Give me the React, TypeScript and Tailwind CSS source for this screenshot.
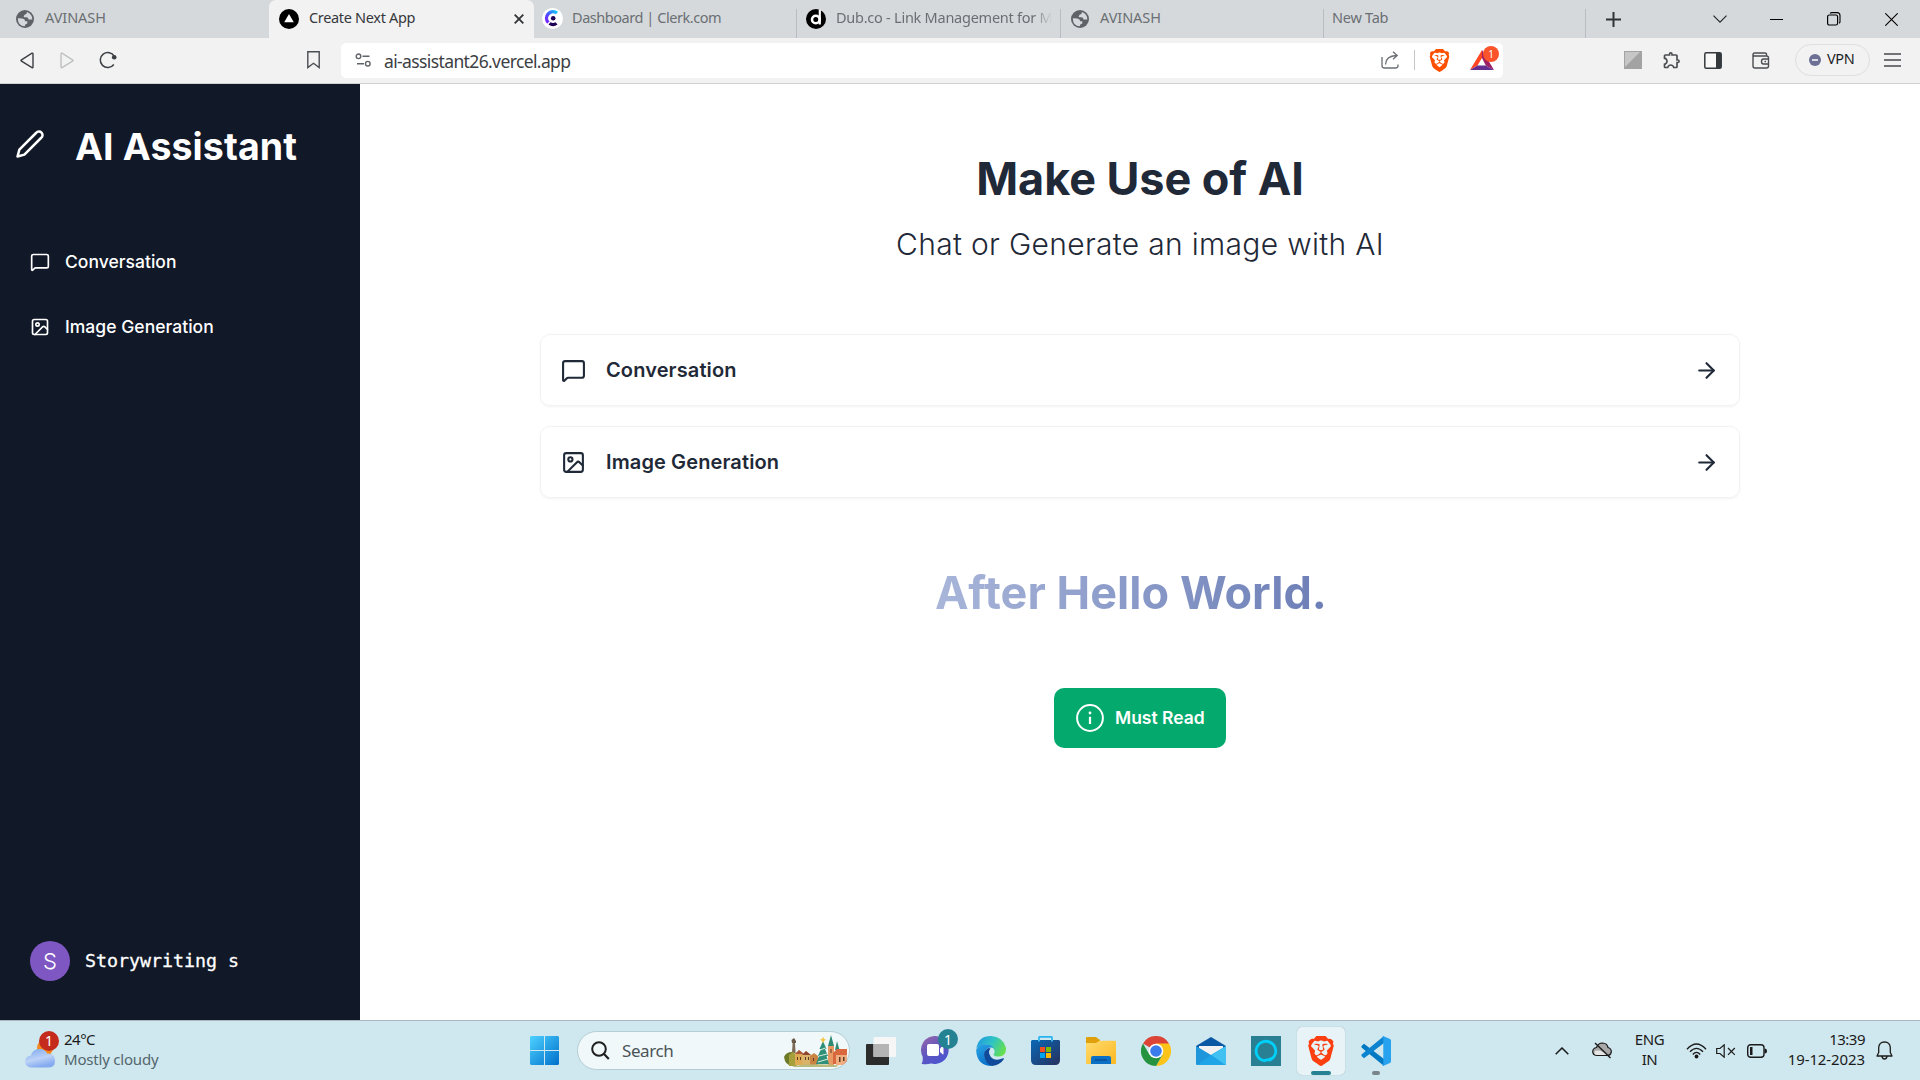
import React from "react";
import { ArrowRight, Image as ImageIcon, MessageSquare } from "lucide-react";
import { SiBrave } from "react-icons/si";
import { MdOutlineExtension } from "react-icons/md";

const ui = "font-['Noto_Sans','Open_Sans',sans-serif]";

function GlobeIcon() {
  return (
    <svg width="18" height="18" viewBox="0 0 18 18" className="mr-[11px]">
      <circle cx="9" cy="9" r="9" fill="#5f6368" />
      <path d="M1.800 8.200L6.500 8.400Q9.200 8.800 9.200 11.200H11.300V13.600Q9 13.800 8.800 16.300Q2 16.300 1.800 8.200Z" fill="#d5d9dc" />
      <path d="M11 2Q11 4.600 8.600 4.700L7.600 6.400Q8 7.600 10 7.300Q12.300 7 12.500 9.500L16.300 9.600Q16.400 4 11 2Z" fill="#d5d9dc" />
    </svg>
  );
}

function ClerkIcon() {
  return (
    <svg width="21" height="21" viewBox="0 0 21 21">
      <defs>
        <linearGradient id="clerk" x1="1" y1="0" x2="0" y2="1">
          <stop offset="0" stopColor="#12c8ff" />
          <stop offset="0.55" stopColor="#4b50ff" />
          <stop offset="1" stopColor="#7a1fff" />
        </linearGradient>
      </defs>
      <circle cx="10.500" cy="10.500" r="10.500" fill="#fff" />
      <path d="M15 5A6.500 6.500 0 0 0 6.300 14.600" fill="none" stroke="url(#clerk)" strokeWidth="3.400" />
      <circle cx="11.200" cy="10.300" r="2.300" fill="#1f0256" />
      <path d="M6.500 16.500L8.500 14.300Q11 15.800 13.500 14.300L15.500 16.500Q11 20 6.500 16.500Z" fill="#1f0256" />
    </svg>
  );
}

function DubIcon() {
  return (
    <svg width="20" height="20" viewBox="0 0 20 20">
      <circle cx="10" cy="10" r="10" fill="#000" />
      <circle cx="9.800" cy="10.500" r="3.800" fill="none" stroke="#fff" strokeWidth="2.600" />
      <path d="M13.800 0.500V15.500" stroke="#fff" strokeWidth="2.200" />
    </svg>
  );
}

function BatIcon() {
  return (
    <svg width="24" height="20" viewBox="0 0 24 20">
      <path d="M12 0L24 20L15.800 15.500L12 8Z" fill="#9e1f63" />
      <path d="M12 0L0 20L7.500 15.500L12 8Z" fill="#ff4724" />
      <path d="M0 20H24L15.800 15.500H7.500Z" fill="#662d91" />
    </svg>
  );
}

function Tab({ icon, title, width, titleClass }: { icon?: React.ReactNode; title: string; width: string; titleClass?: string }) {
  return (
    <div className={`flex h-full shrink-0 items-center overflow-hidden pb-px whitespace-nowrap text-[14.5px] text-[#6b6f73] ${width}`}>
      {icon}
      <span className={`mb-px ${titleClass ?? ""}`}>{title}</span>
    </div>
  );
}

function Divider() {
  return <div className="mt-[9px] h-[29px] w-px shrink-0 self-start bg-[#b9bdc1]" />;
}

function TabStrip() {
  return (
    <div className="flex h-[38px] bg-[#d5d9dc]">
      <Tab width="w-[269px] pl-[16px]" titleClass="tracking-[-0.05px]" icon={<GlobeIcon />} title="AVINASH" />
      <div className="flex w-[265px] shrink-0 items-center rounded-t-[7px] bg-[#f2f2f2] pl-[10px] text-[14.5px] text-[#35383c]">
        <svg width="20" height="20" viewBox="0 0 20 20" className="mr-[10px]">
          <circle cx="10" cy="10" r="10" fill="#000" />
          <path d="M10 5L14.800 13.300H5.200Z" fill="#fff" />
        </svg>
        <span className="mb-[2px] tracking-[-0.33px]">Create Next App</span>
        <svg width="10" height="10" viewBox="0 0 10 10" className="mr-[10px] ml-auto">
          <path d="M0.700 0.700L9.300 9.300M9.300 0.700L0.700 9.300" stroke="#303437" strokeWidth="1.800" />
        </svg>
      </div>
      <Tab width="w-[262px] pl-[8px]" titleClass="ml-[9px] tracking-[-0.45px]" icon={<ClerkIcon />} title="Dashboard | Clerk.com" />
      <Divider />
      <Tab
        width="w-[263px] pl-[9px]"
        titleClass="ml-[10px] tracking-[-0.25px] [mask-image:linear-gradient(to_right,#000_91%,transparent)]"
        icon={<DubIcon />}
        title="Dub.co - Link Management for M"
      />
      <Divider />
      <Tab width="w-[262px] pl-[10px]" titleClass="tracking-[-0.05px]" icon={<GlobeIcon />} title="AVINASH" />
      <Divider />
      <Tab width="w-[261px] pl-[8px]" titleClass="tracking-[-0.25px]" title="New Tab" />
      <Divider />
      <div className="flex flex-1 items-center pl-[20px]">
        <svg width="15" height="15" viewBox="0 0 15 15">
          <path d="M7.500 0V15M0 7.500H15" stroke="#303437" strokeWidth="2" />
        </svg>
        <svg width="14" height="8" viewBox="0 0 14 8" className="ml-[92px]">
          <path d="M0.500 0.700L7 7.200L13.500 0.700" fill="none" stroke="#222" strokeWidth="1.100" />
        </svg>
        <svg width="13" height="1" viewBox="0 0 13 1" className="ml-[43px]">
          <path d="M0 0.500H13" stroke="#000" />
        </svg>
        <svg width="14" height="14" viewBox="0 0 14 14" className="ml-[44px]">
          <rect x="0.600" y="3" width="10" height="10" rx="1.800" fill="none" stroke="#000" strokeWidth="1.200" />
          <path d="M3 1.200Q4 0.600 5 0.600H10A3 3 0 0 1 13 3.600V9.500Q13 10.500 12.300 11.300" fill="none" stroke="#000" strokeWidth="1.100" />
        </svg>
        <svg width="13" height="13" viewBox="0 0 13 13" className="ml-[44px]">
          <path d="M0.300 0.300L12.700 12.700M12.700 0.300L0.300 12.700" stroke="#000" strokeWidth="1.100" />
        </svg>
      </div>
    </div>
  );
}

function Toolbar() {
  return (
    <div className="flex h-[46px] items-center border-b border-[#cfd1d3] bg-[#f2f2f2] pb-px">
      <div className="flex w-[341px] shrink-0 items-center pl-[20px]">
        <svg width="14" height="17" viewBox="0 0 14 17">
          <path d="M12 1.200Q13 0.900 13 2V15Q13 16.100 12 15.600L1.500 9.200Q0.500 8.500 1.500 7.800Z" fill="none" stroke="#3b3e43" strokeWidth="1.400" />
        </svg>
        <svg width="14" height="17" viewBox="0 0 14 17" className="ml-[26px]">
          <path d="M2 1.200Q1 0.900 1 2V15Q1 16.100 2 15.600L12.500 9.200Q13.500 8.500 12.500 7.800Z" fill="none" stroke="#bfc0c2" strokeWidth="1.400" />
        </svg>
        <svg width="18" height="18" viewBox="0 0 18 18" className="ml-[25px]">
          <path d="M14.800 13.500A7.500 7.500 0 1 1 15.300 5.300" fill="none" stroke="#3b3e43" strokeWidth="1.500" />
          <circle cx="15.200" cy="6.200" r="2.300" fill="#3b3e43" />
        </svg>
        <svg width="13" height="18" viewBox="0 0 13 18" className="ml-[190px]">
          <path d="M0.800 0.800H12.200V16.500L6.500 12.300L0.800 16.500Z" fill="none" stroke="#4a4d52" strokeWidth="1.400" />
        </svg>
      </div>
      <div className="flex h-[35px] w-[1162px] shrink-0 items-center rounded-[5px] bg-white pl-[14px]">
        <svg width="17" height="14" viewBox="0 0 17 14">
          <g fill="none" stroke="#5f6368" strokeWidth="1.400">
            <circle cx="3.500" cy="3.300" r="2.300" />
            <path d="M7.500 3.300H14.500M2 10.700H9" />
            <circle cx="12.800" cy="10.700" r="2.300" />
          </g>
        </svg>
        <span className="mt-[2px] ml-[12px] text-[17.5px] tracking-[-0.62px] text-[#3c4043]">ai-assistant26.vercel.app</span>
        <div className="mr-[4px] ml-auto flex items-center">
          <svg width="18" height="18" viewBox="0 0 18 18">
            <g fill="none" stroke="#6a6e73" strokeWidth="1.300">
              <path d="M1 6V14.500Q1 17 3.500 17H14.500Q17 17 17 14.500V13.500" />
              <path d="M4.500 13.500Q4.700 5 15.500 4.500M12 0.800L16.200 4.500L12 8.300" />
            </g>
          </svg>
          <div className="ml-[15px] h-[20px] w-px bg-[#c4c6c9]" />
          <SiBrave size={23} color="#ff5000" className="ml-[13px]" />
          <div className="relative ml-[19px] flex h-[28px] w-[29px] items-center">
            <BatIcon />
            <span className="absolute top-0 right-0 flex size-[16px] items-center justify-center rounded-full bg-[#fb542b] text-[10px] text-white">1</span>
          </div>
        </div>
      </div>
      <div className="flex flex-1 items-center pl-[121px]">
        <svg width="18" height="18" viewBox="0 0 18 18">
          <rect width="18" height="18" fill="#a3a3a3" />
          <path d="M1 1H16L1 16Z" fill="#c6c6c6" />
        </svg>
        <MdOutlineExtension size={20} color="#4b4e53" className="ml-[20px]" />
        <svg width="18" height="17" viewBox="0 0 18 17" className="ml-[22px]">
          <rect x="0.800" y="0.800" width="16.400" height="15.400" rx="1.500" fill="#f8f8f8" stroke="#34393e" strokeWidth="1.500" />
          <path d="M12 1H17V16H12Z" fill="#34393e" />
        </svg>
        <svg width="18" height="17" viewBox="0 0 18 17" className="ml-[30px]">
          <g fill="none" stroke="#4b4e53" strokeWidth="1.400">
            <path d="M14.500 4V2Q14.500 1 13 1H2.500Q1 1 1 2.500V14Q1 16 3 16H14.500Q16.500 16 16.500 14V6Q16.500 4 14.500 4H2.500Q1 4 1 2.500" />
            <path d="M17 7H11.500Q9.500 7 9.500 9.500Q9.500 12 11.500 12H17M12.500 9.500H14" />
          </g>
        </svg>
        <div className="ml-[25px] flex h-[32px] w-[75px] items-center rounded-full border border-[#dedfe1] pl-[13px]">
          <svg width="12" height="12" viewBox="0 0 12 12">
            <circle cx="6" cy="6" r="6" fill="#6b7094" />
            <path d="M3 6H9" stroke="#fff" strokeWidth="1.500" />
          </svg>
          <span className="mb-[2px] ml-[6px] text-[14.5px] tracking-[-0.4px] text-[#1c1e26]">VPN</span>
        </div>
        <svg width="17" height="14" viewBox="0 0 17 14" className="ml-[14px]">
          <path d="M0 1H17M0 7H17M0 13H17" stroke="#45484d" strokeWidth="1.400" />
        </svg>
      </div>
    </div>
  );
}

function Sidebar() {
  return (
    <aside className="flex w-[360px] shrink-0 flex-col bg-[#111827] text-white">
      <div className="mt-[33px] flex h-[60px] items-center pl-[15px]">
        <svg width="30" height="30" viewBox="0 0 24 24" fill="none" stroke="#fff" strokeWidth="2" strokeLinecap="round" strokeLinejoin="round" className="mb-[7px]">
          <path d="M17 3a2.850 2.830 0 1 1 4 4L7.500 20.500 2 22l1.500-5.500Z" />
        </svg>
        <h1 className="ml-[30px] text-[37.5px] font-bold tracking-[0.1px]">AI Assistant</h1>
      </div>
      <nav className="mt-[52px] flex flex-col text-[17.5px] font-medium">
        <div className="flex h-[65px] items-center pl-[30px]">
          <MessageSquare size={20} />
          <span className="mt-[2px] ml-[15px] tracking-[0.02px]">Conversation</span>
        </div>
        <div className="flex h-[65px] items-center pl-[30px]">
          <ImageIcon size={20} />
          <span className="mt-[2px] ml-[15px] tracking-[0.03px]">Image Generation</span>
        </div>
      </nav>
      <div className="mt-auto mb-[39px] flex items-center pl-[30px]">
        <div className="flex size-[40px] items-center justify-center rounded-full bg-[#7e57c2] text-[22px] font-light">S</div>
        <span className="ml-[15px] font-['DejaVu_Sans_Mono',monospace] text-[18.3px] [-webkit-text-stroke:0.3px_white]">Storywriting s</span>
      </div>
    </aside>
  );
}

function Card({ icon, label }: { icon: React.ReactNode; label: string }) {
  return (
    <div className="flex h-[72px] items-center rounded-[10px] border border-black/5 px-[20px] shadow-[0_1px_3px_rgba(0,0,0,0.05)]">
      {icon}
      <span className="ml-[20px] text-[20px] font-semibold tracking-[0.12px]">{label}</span>
      <ArrowRight size={25} className="ml-auto" />
    </div>
  );
}

function Main() {
  return (
    <main className="flex flex-1 flex-col items-center bg-white text-[#1f2937]">
      <h2 className="mt-[70px] text-[45px] leading-[50px] font-bold tracking-[-0.08px]">Make Use of AI</h2>
      <p className="mt-[20px] text-[30px] leading-[40px] font-light tracking-[0.31px]">Chat or Generate an image with AI</p>
      <div className="mt-[70px] flex w-[1200px] flex-col gap-[20px]">
        <Card icon={<MessageSquare size={25} />} label="Conversation" />
        <Card icon={<ImageIcon size={25} />} label="Image Generation" />
      </div>
      <div className="mt-[66px] mr-[18px] bg-linear-to-r from-[#a9b6da] to-[#6c7eb6] bg-clip-text text-[45px] leading-[58px] font-bold tracking-[0.05px] text-transparent">
        After Hello World.
      </div>
      <button className="mt-[66px] flex h-[60px] w-[172px] items-center rounded-[10px] bg-[#04aa6d] pl-[22px] text-[17.5px] font-semibold text-white">
        <svg width="28" height="28" viewBox="0 0 28 28">
          <circle cx="14" cy="14" r="12.900" fill="none" stroke="#fff" strokeWidth="2" />
          <path d="M14 12.800V20" stroke="#fff" strokeWidth="2.200" />
          <circle cx="14" cy="9" r="1.400" fill="#fff" />
        </svg>
        <span className="ml-[11px]">Must Read</span>
      </button>
    </main>
  );
}

function CityArt() {
  return (
    <svg width="63" height="32" viewBox="0 0 63 32">
      <path d="M0 22Q2 17 8 17V31Q1 30 0 22Z" fill="#6d7a28" />
      <path d="M9 4H11V8L11.600 18H8L8.600 8Z" fill="#7c6a55" />
      <path d="M7.500 5L10 3L12 6V8H8Z" fill="#6b5a48" />
      <path d="M5 20L9 17L13 20V31H5Z" fill="#a5a03c" />
      <path d="M11 19L15 15L20 19V30H11Z" fill="#e0a954" />
      <path d="M11 19L15 15L20 19Z" fill="#a9573c" />
      <path d="M18 20L22 16L27 20V30H18Z" fill="#d9b36a" />
      <path d="M18 20L22 16L27 20Z" fill="#8d4630" />
      <path d="M26 21L30 18L34 21V30H26Z" fill="#c98444" />
      <path d="M44 11L47 0L50 11Z" fill="#2e8b73" />
      <path d="M44 11H50V30H44Z" fill="#e79a63" />
      <path d="M51 15L53 6L55.500 15Z" fill="#2e8b73" />
      <path d="M49 18L53 14H63V26L60 29H49Z" fill="#d9683f" />
      <path d="M52 20H63V25L59 30H52Z" fill="#f0ae80" />
      <path d="M39 6L42.500 14H41L44 21H42.500L45 29H32L35 21H34L37 14H35.500Z" fill="#2f8f78" />
      <path d="M36 15L41.500 13M35 21L43 19M34 27L44 24" stroke="#cfe9d7" strokeWidth="1.200" />
      <path d="M39 1.500L40 4L42 4.500L40 6L39 8.500L38 6L36 4.500L38 4Z" fill="#f4c542" />
      <path d="M13 22H14V25H13ZM16 22H17V25H16ZM21 22H22V25H21ZM24 22H25V25H24ZM29 23H30V26H29ZM55 22H56.500V27H55ZM59 22H60.500V26H59ZM46.500 14H47.500V18H46.500Z" fill="#5b3a26" />
      <path d="M8 31Q30 28 55 30.500L52 32H10Z" fill="#b7bb7c" />
    </svg>
  );
}

function Start() {
  return (
    <svg width="29" height="29" viewBox="0 0 29 29">
      <defs>
        <linearGradient id="win" x1="0" y1="0" x2="29" y2="29" gradientUnits="userSpaceOnUse">
          <stop offset="0" stopColor="#4dd2ff" />
          <stop offset="1" stopColor="#006fcb" />
        </linearGradient>
      </defs>
      <path d="M1 0H14V14H0V1ZM15 0H28L29 1V14H15ZM0 15H14V29H1L0 28ZM15 15H29V28L28 29H15Z" fill="url(#win)" />
    </svg>
  );
}

function TaskView() {
  return (
    <svg width="30" height="28" viewBox="0 0 30 28">
      <rect y="7" width="23" height="21" rx="1" fill="#2c2c2c" />
      <rect x="7.500" width="22.500" height="20" rx="1" fill="#f6f6f6" />
      <path d="M7.500 7H23V20H7.500Z" fill="#b4b4b4" />
    </svg>
  );
}

function Chat() {
  return (
    <div className="relative size-[29px]">
      <svg width="29" height="29" viewBox="0 0 29 29">
        <defs>
          <linearGradient id="chat" x1="0" y1="0" x2="0.6" y2="1">
            <stop offset="0" stopColor="#9a68a8" />
            <stop offset="0.6" stopColor="#5d55c0" />
            <stop offset="1" stopColor="#4c55cf" />
          </linearGradient>
        </defs>
        <path d="M14.500 0A14 14 0 1 1 10 27.500Q5 29 0.500 27.800Q2.300 25 1.600 20.500A14 14 0 0 1 14.500 0Z" fill="url(#chat)" />
        <rect x="6" y="8" width="12" height="12" rx="2" fill="#fff" />
        <path d="M19 12.500L22 9.500Q22.500 9.500 22.500 10V18Q22.500 18.500 22 18.500L19 16Z" fill="#fff" />
      </svg>
      <span className="absolute -top-[7px] -right-[8px] flex size-[20px] items-center justify-center rounded-full bg-[#258293] text-[14px] text-white">1</span>
    </div>
  );
}

function Edge() {
  return (
    <svg width="30" height="30" viewBox="0 0 30 30">
      <defs>
        <linearGradient id="edgeTop" x1="0" y1="0.2" x2="1" y2="0.6">
          <stop offset="0" stopColor="#2099e0" />
          <stop offset="0.5" stopColor="#2fc4c5" />
          <stop offset="1" stopColor="#67df4c" />
        </linearGradient>
        <linearGradient id="edgeLow" x1="0" y1="0" x2="0.5" y2="1">
          <stop offset="0" stopColor="#2ba5e6" />
          <stop offset="1" stopColor="#0871c9" />
        </linearGradient>
      </defs>
      <path d="M0.300 13Q2 0 15 0Q27 0.500 30 12Q30.500 20 22.500 20.500Q18 20.500 17.500 18.500Q19.500 16 18 13.500Q15 8 8.500 8.500Q3 9 0.300 13Z" fill="url(#edgeTop)" />
      <path d="M0.100 14Q3 8 9 8.200Q15 8.500 17.500 12Q11 10 8.500 17Q7 25 16 30Q1 30 0.100 14Z" fill="url(#edgeLow)" />
      <path d="M12.500 12Q7 15 8.200 21Q10 28 16 30Q24 29 28 23Q28 22 27 22.300Q19 26 14.500 20.500Q11.500 16 14.500 12.500Q13.500 11.800 12.500 12Z" fill="#104a9b" />
    </svg>
  );
}

function Store() {
  return (
    <svg width="29" height="29" viewBox="0 0 29 29">
      <defs>
        <linearGradient id="store" x1="0" y1="0" x2="1" y2="1">
          <stop offset="0" stopColor="#0a68b7" />
          <stop offset="1" stopColor="#27305c" />
        </linearGradient>
      </defs>
      <path d="M8 7V1.500Q8 0.800 9 0.800H20Q21 0.800 21 1.500V7" fill="none" stroke="#27b5f0" strokeWidth="1.700" />
      <path d="M1 4H28L29 5V24Q29 29 24 29H5Q0 29 0 24V5Z" fill="url(#store)" />
      <path d="M9 11H14V16H9Z" fill="#f25022" />
      <path d="M15 11H20V16H15Z" fill="#7fba00" />
      <path d="M9 17H14V22H9Z" fill="#00a4ef" />
      <path d="M15 17H20V22H15Z" fill="#ffb900" />
      <path d="M8 4V5.500M21 4V5.500" stroke="#46c9fa" strokeWidth="1.700" />
    </svg>
  );
}

function Folder() {
  return (
    <svg width="30" height="27" viewBox="0 0 30 27">
      <defs>
        <linearGradient id="folder" x1="0" y1="0" x2="1" y2="1">
          <stop offset="0" stopColor="#ffdb6e" />
          <stop offset="1" stopColor="#fcb822" />
        </linearGradient>
      </defs>
      <path d="M0 1Q0 0 1 0H10L13 2.500H14V9H0Z" fill="#dfa00b" />
      <path d="M0 6H10L13.500 3.800H29Q30 3.800 30 5V26Q30 27 29 27H1Q0 27 0 26Z" fill="url(#folder)" />
      <path d="M5 27V21Q5 19 7 19H23Q25 19 25 21V27Z" fill="#0b6fc4" />
      <path d="M9 23H21" stroke="#084a91" strokeWidth="1.300" />
    </svg>
  );
}

function Chrome() {
  return (
    <svg width="30" height="30" viewBox="0 0 30 30">
      <path d="M15 15L2 7.500A15 15 0 0 1 28 7.500Z" fill="#db4437" />
      <path d="M15 15V7.500H28A15 15 0 0 1 15 30L21.500 18.700Z" fill="#fcc419" />
      <path d="M15 15L21.500 18.800L15 30A15 15 0 0 1 2 7.500L8.500 18.700Z" fill="#25933f" />
      <circle cx="15" cy="15" r="7.300" fill="#fff" />
      <circle cx="15" cy="15" r="5.800" fill="#3b7cec" />
    </svg>
  );
}

function Mail() {
  return (
    <svg width="30" height="28" viewBox="0 0 30 28">
      <path d="M0 9L15 0L30 9V14H0Z" fill="#0a58a4" />
      <path d="M3 9H27V17L15 23L3 17Z" fill="#f2f2f2" />
      <path d="M0 9L15 18L30 9V27Q30 28 29 28H1Q0 28 0 27Z" fill="#1f96dc" />
      <path d="M15 18L30 9V27Q30 28 29 28Z" fill="#41c1f2" />
      <path d="M15 18L29 28H1Z" fill="#1fa4e8" />
    </svg>
  );
}

function Alexa() {
  return (
    <svg width="30" height="30" viewBox="0 0 30 30">
      <path d="M0 0H30V30H0Z" fill="#288092" />
      <path d="M14 24.800A9.800 9.800 0 1 1 17.500 24.500" fill="none" stroke="#00cffa" strokeWidth="2.800" />
      <path d="M13.500 26L13 23Q20 22.800 23.500 18.500Q22 25 13.500 26Z" fill="#00cffa" />
    </svg>
  );
}

function VsCode() {
  return (
    <svg width="30" height="30" viewBox="0 0 30 30">
      <path d="M0.500 10L3 7.800L23 23V30L0.500 11.500Z" fill="#0179c2" />
      <path d="M0.500 20L3 22.200L23 7V0L0.500 18.500Z" fill="#0b83cf" />
      <path d="M22 0L29 3Q30 3.500 30 5V25Q30 26.500 29 27L22 30Q21 29 22.300 28V2Q21 1 22 0Z" fill="#27a2ee" />
    </svg>
  );
}

function Taskbar() {
  return (
    <footer className="flex h-[60px] items-center border-t border-[#a9b8bf] bg-[#cfe7ee]">
      <div className="flex w-[530px] shrink-0 items-center pl-[25px]">
        <div className="relative mb-[2px] h-[36px] w-[34px]">
          <svg width="34" height="36" viewBox="0 0 34 36">
            <defs>
              <linearGradient id="cloud" x1="0" y1="0" x2="0.4" y2="1">
                <stop offset="0" stopColor="#7ba6ee" />
                <stop offset="0.6" stopColor="#bcd2f7" />
                <stop offset="1" stopColor="#86aaf0" />
              </linearGradient>
            </defs>
            <circle cx="20" cy="16" r="8" fill="#f28a1e" />
            <path d="M6 35.500A6 6 0 0 1 6 23.500Q8 16.500 15 17Q20 17 22 21.500Q30 21 30 28.500Q30 35.500 24 35.500Z" fill="url(#cloud)" />
          </svg>
          <span className="absolute -top-px right-0 flex size-[20px] items-center justify-center rounded-full bg-[#c42b1c] text-[14px] text-white">1</span>
        </div>
        <div className="mb-[4px] ml-[5px] text-[15px] leading-[20px]">
          <div className="tracking-[-0.5px] text-[#1b1b1b]">24°C</div>
          <div className="tracking-[-0.2px] text-[#53666d]">Mostly cloudy</div>
        </div>
      </div>
      <Start />
      <div className="ml-[18px] flex h-[39px] w-[273px] shrink-0 items-center rounded-full border border-[#b4cdd5] bg-[#f0f8fa] pl-[13px]">
        <svg width="19" height="19" viewBox="0 0 19 19">
          <circle cx="8" cy="8" r="6.800" fill="none" stroke="#1f1f1f" strokeWidth="2" />
          <path d="M12.800 12.800L17.800 18" stroke="#1f1f1f" strokeWidth="2.200" />
        </svg>
        <span className="ml-[12px] text-[17px] tracking-[-0.4px] text-[#4a5356]">Search</span>
        <div className="mr-[2px] ml-auto">
          <CityArt />
        </div>
      </div>
      <div className="ml-[16px] flex items-center">
        <TaskView />
        <div className="ml-[25px]"><Chat /></div>
        <div className="ml-[26px]"><Edge /></div>
        <div className="ml-[25px]"><Store /></div>
        <div className="ml-[26px]"><Folder /></div>
        <div className="ml-[25px]"><Chrome /></div>
        <div className="ml-[25px]"><Mail /></div>
        <div className="ml-[25px]"><Alexa /></div>
        <div className="relative ml-[16px] flex size-[48px] items-center justify-center rounded-[5px] bg-[#e7f3f7] shadow-[0_0_1px_rgba(0,0,0,0.3)]">
          <SiBrave size={30} color="#fb3f10" />
          <span className="absolute bottom-0 left-[14px] h-[4px] w-[20px] rounded-full bg-[#258293]" />
        </div>
        <div className="relative ml-[16px] flex h-[48px] items-center">
          <VsCode />
          <span className="absolute bottom-0 left-[11px] h-[4px] w-[8px] rounded-full bg-[#798489]" />
        </div>
      </div>
      <div className="ml-auto flex items-center pr-[27px] text-[15px] leading-[20px] text-[#1b1b1b]">
        <svg width="14" height="8" viewBox="0 0 14 8">
          <path d="M0.700 7.300L7 1L13.300 7.300" fill="none" stroke="#1b1b1b" strokeWidth="1.500" />
        </svg>
        <svg width="20" height="17" viewBox="0 0 20 17" className="ml-[23px]">
          <path d="M4.500 13.500Q0.700 13 0.700 9.500Q1 6 4.500 5.500Q6 1 10.500 1Q15 1.200 16 5.500Q19.500 6.500 19.300 10Q18.500 13.500 15.500 13.500Z" fill="#a8a8a8" stroke="#1b1b1b" strokeWidth="1.200" />
          <path d="M3 9Q9 7 15 13H4.500Q1.500 12.500 3 9Z" fill="#e6e6e6" />
          <path d="M3 1L18.500 16" stroke="#1b1b1b" strokeWidth="1.400" />
        </svg>
        <div className="mb-[3px] ml-[22px] w-[31px] text-center tracking-[-0.4px]">
          <div>ENG</div>
          <div>IN</div>
        </div>
        <svg width="21" height="16" viewBox="0 0 21 16" className="ml-[21px]">
          <g fill="none" stroke="#1b1b1b" strokeWidth="1.300">
            <path d="M1 6.300Q10.500 -4.300 20 6.300M4 8.800Q10.500 1.800 17 8.800M6.800 11.500Q10.500 7.300 14.200 11.500" />
          </g>
          <circle cx="10.500" cy="13.500" r="1.900" fill="#1b1b1b" />
        </svg>
        <svg width="20" height="14" viewBox="0 0 20 14" className="ml-[9px]">
          <g fill="none" stroke="#1b1b1b" strokeWidth="1.200">
            <path d="M0.700 4.500H4L8.200 0.800V13.200L4 9.500H0.700Z" />
            <path d="M12 4L18.800 10.800M18.800 4L12 10.800" />
          </g>
        </svg>
        <svg width="20" height="14" viewBox="0 0 20 14" className="ml-[11px]">
          <rect x="0.700" y="0.700" width="16.300" height="12.600" rx="3" fill="none" stroke="#1b1b1b" strokeWidth="1.400" />
          <path d="M3 3H5.500V11H3ZM17.500 4.500Q20 4.500 20 7Q20 9.500 17.500 9.500Z" fill="#1b1b1b" />
        </svg>
        <div className="mb-[4px] ml-[16px] w-[82px] text-right whitespace-nowrap">
          <div className="tracking-[-0.5px]">13:39</div>
          <div className="tracking-[-0.1px]">19-12-2023</div>
        </div>
        <svg width="17" height="19" viewBox="0 0 17 19" className="ml-[11px]">
          <path d="M1 15L2.700 11.500V6.500Q3.200 1 8.500 0.800Q13.800 1 14.300 6.500V11.500L16 15ZM6 15.500Q6.500 18 8.500 18Q10.500 18 11 15.500" fill="none" stroke="#1b1b1b" strokeWidth="1.300" strokeLinejoin="round" />
        </svg>
      </div>
    </footer>
  );
}

export default function App() {
  return (
    <div className={`flex h-[1080px] w-[1920px] flex-col overflow-hidden ${ui}`}>
      <TabStrip />
      <Toolbar />
      <div className="flex flex-1 font-['Inter',sans-serif]">
        <Sidebar />
        <Main />
      </div>
      <Taskbar />
    </div>
  );
}
